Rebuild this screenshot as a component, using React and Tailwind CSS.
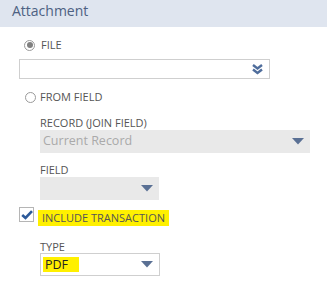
import React from "react";

const Tri = () => (
  <svg width="12" height="7" viewBox="0 0 12 7"><path d="M0 0 H12 L6 6.5 Z" fill="#5a7094" /></svg>
);

const DoubleChev = () => (
  <svg width="11" height="11" viewBox="0 0 11 11">
    <path d="M1 1 L5.5 4.5 L10 1" stroke="#4f6d9c" strokeWidth="2.4" fill="none" />
    <path d="M1 5.5 L5.5 9 L10 5.5" stroke="#4f6d9c" strokeWidth="2.4" fill="none" />
  </svg>
);

export default function App() {
  return (
    <div className="w-[327px] h-[295px] bg-white text-[#333] overflow-hidden" style={{ fontFamily: '"Open Sans", sans-serif' }}>
      <div className="h-[27px] bg-[#dfe5ef] pl-[12px] pt-[1px] text-[14px] leading-[20px] text-[#4d6182]">Attachment</div>
      <div className="flex flex-col pl-[19px]">
        <div className="flex items-center h-[14px] mt-[11px] pl-[5px]">
          <span className="w-[11px] h-[11px] rounded-full border border-[#9a9a9a] flex items-center justify-center">
            <span className="w-[6px] h-[6px] rounded-full bg-[#808080]" />
          </span>
          <span className="ml-[6px] text-[11px] text-[#555] leading-[14px]">FILE</span>
        </div>
        <div className="mt-[7px] w-[251px] h-[20px] border border-[#cfcfcf] flex items-center justify-end pr-[6px]">
          <DoubleChev />
        </div>
        <div className="flex items-center h-[14px] mt-[11px] pl-[6px]">
          <span className="w-[11px] h-[11px] rounded-full border border-[#9a9a9a]" />
          <span className="ml-[4px] text-[11px] text-[#555] leading-[14px]">FROM FIELD</span>
        </div>
        <div className="pl-[21px] flex flex-col">
          <div className="mt-[13px] text-[11px] leading-[12px] text-[#555]">RECORD (JOIN FIELD)</div>
          <div className="mt-[1px] w-[270px] h-[23px] bg-[#e9e9e9] flex items-center justify-between pl-[3px] pr-[6px]">
            <span className="text-[12.5px] text-[#aaaaaa]">Current Record</span>
            <Tri />
          </div>
          <div className="mt-[11px] text-[11px] leading-[12px] text-[#555]">FIELD</div>
          <div className="mt-[1px] w-[119px] h-[23px] bg-[#e9e9e9] flex items-center justify-end pr-[6px]">
            <Tri />
          </div>
        </div>
        <div className="flex items-start mt-[7px]">
          <span className="w-[15px] h-[15px] border border-[#b5b5b5] flex items-center justify-center">
            <svg width="12" height="10" viewBox="0 0 12 10"><path d="M1.2 5 L4.5 8 L11 1.2" stroke="#2c5a9a" strokeWidth="2.6" fill="none" /></svg>
          </span>
          <span className="ml-[4px] mt-[3px] h-[16px] bg-[#fff000] px-[4px] text-[11px] leading-[16px] text-[#555]">INCLUDE TRANSACTION</span>
        </div>
        <div className="pl-[21px] flex flex-col">
          <div className="mt-[15px] text-[11px] leading-[12px] text-[#555]">TYPE</div>
          <div className="mt-0 w-[120px] h-[23px] border border-[#cfcfcf] flex items-center justify-between pl-[2px] pr-[6px]">
            <span className="bg-[#fff000] w-[36px] h-[15px] pl-[2px] text-[12.5px] leading-[15px] text-[#222]">PDF</span>
            <Tri />
          </div>
        </div>
      </div>
    </div>
  );
}
